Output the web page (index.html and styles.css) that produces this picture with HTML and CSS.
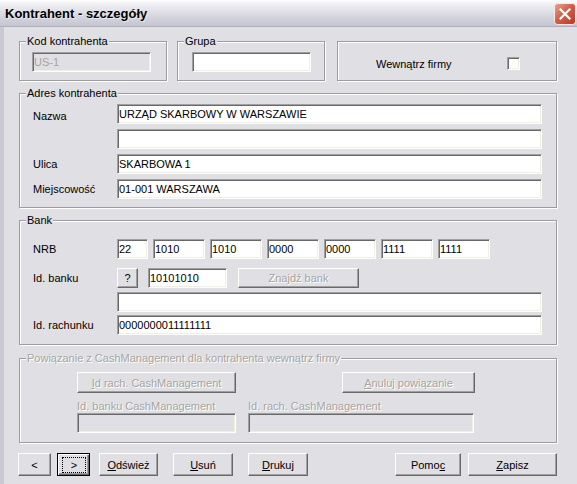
FILE: index.html
```html
<!DOCTYPE html>
<html lang="pl">
<head>
<meta charset="utf-8">
<title>Kontrahent - szczegóły</title>
<link rel="stylesheet" href="styles.css">
</head>
<body>
<div class="window">
  <div class="titlebar">
    <span class="title">Kontrahent - szczegóły</span>
    <span class="close">
      <svg width="22" height="22" viewBox="0 0 22 22">
        <defs>
          <linearGradient id="cg" x1="0" y1="0" x2="1" y2="1">
            <stop offset="0" stop-color="#eba595"/>
            <stop offset="0.45" stop-color="#d3604b"/>
            <stop offset="1" stop-color="#b63927"/>
          </linearGradient>
        </defs>
        <rect x="0.5" y="0.5" width="21" height="21" rx="3" fill="url(#cg)" stroke="#f4ece9"/>
        <path d="M6.5 6.5 L15.5 15.5 M15.5 6.5 L6.5 15.5" stroke="#fff" stroke-width="2.2" stroke-linecap="square"/>
      </svg>
    </span>
  </div>
  <div class="client">
    <div class="content">
      <div class="row-top">
        <div class="group g-kod">
          <span class="legend">Kod kontrahenta</span>
          <div class="field disabled f-kod">US-1</div>
        </div>
        <div class="group g-grupa">
          <span class="legend">Grupa</span>
          <div class="field f-grupa"></div>
        </div>
        <div class="group g-wew">
          <span>Wewnątrz firmy</span>
          <span class="checkbox"></span>
        </div>
      </div>

      <div class="group g-adres">
        <span class="legend">Adres kontrahenta</span>
        <div class="frow"><span class="lbl lbl-low">Nazwa</span><div class="field">URZĄD SKARBOWY W WARSZAWIE</div></div>
        <div class="frow"><span class="lbl"></span><div class="field"></div></div>
        <div class="frow"><span class="lbl">Ulica</span><div class="field">SKARBOWA 1</div></div>
        <div class="frow"><span class="lbl">Miejscowość</span><div class="field">01-001 WARSZAWA</div></div>
      </div>

      <div class="group g-bank">
        <span class="legend">Bank</span>
        <div class="frow">
          <span class="lbl">NRB</span>
          <div class="nrb">
            <div class="field f-nrb1">22</div>
            <div class="field">1010</div>
            <div class="field">1010</div>
            <div class="field">0000</div>
            <div class="field">0000</div>
            <div class="field">1111</div>
            <div class="field">1111</div>
          </div>
        </div>
        <div class="frow r2">
          <span class="lbl">Id. banku</span>
          <div class="bank-id">
            <span class="btn b-q">?</span>
            <div class="field f-bankid">10101010</div>
            <span class="btn disabled b-find">Znajdź bank</span>
          </div>
        </div>
        <div class="frow r3"><span class="lbl"></span><div class="field"></div></div>
        <div class="frow r4"><span class="lbl">Id. rachunku</span><div class="field">0000000011111111</div></div>
      </div>

      <div class="group g-pow">
        <span class="legend dis-text">Powiązanie z CashManagement dla kontrahenta wewnątrz firmy</span>
        <div class="pow-btns">
          <span class="btn disabled b-idrach"><u>I</u>d rach. CashManagement</span>
          <span class="btn disabled b-anuluj"><u>A</u>nuluj powiązanie</span>
        </div>
        <div class="pow-labels">
          <span class="dis-text pl1">Id. banku CashManagement</span>
          <span class="dis-text">Id. rach. CashManagement</span>
        </div>
        <div class="pow-fields">
          <div class="field disabled pf1"></div>
          <div class="field disabled pf2"></div>
        </div>
      </div>

      <div class="actions">
        <span class="btn a-prev">&lt;</span>
        <span class="btn default a-next"><span class="focus">&gt;</span></span>
        <span class="btn a-odswiez"><u>O</u>dśwież</span>
        <span class="btn a-usun"><u>U</u>suń</span>
        <span class="btn a-drukuj"><u>D</u>rukuj</span>
        <span class="btn a-pomoc">Pomo<u>c</u></span>
        <span class="btn a-zapisz"><u>Z</u>apisz</span>
      </div>
    </div>
  </div>
</div>
</body>
</html>
```

FILE: styles.css
```css
* {
  box-sizing: border-box;
}

html,
body {
  margin: 0;
  padding: 0;
}

body {
  width: 577px;
  height: 484px;
  overflow: hidden;
  background: #e0dfe3;
  font-family: "Liberation Sans", Arial, sans-serif;
  font-size: 11px;
  color: #000;
}

.window {
  width: 577px;
  height: 484px;
  overflow: hidden;
  display: flex;
  flex-direction: column;
}

/* title bar */
.titlebar {
  flex: none;
  height: 27px;
  display: flex;
  align-items: center;
  justify-content: space-between;
  padding: 0 1px 0 5px;
  background: linear-gradient(#fdfdfe 0%, #ececf1 22%, #d7d7e0 60%, #c5c5d1 100%);
  border-bottom: 1px solid #aeaebb;
}

.title {
  font-size: 13px;
  font-weight: bold;
  color: #000;
  text-shadow: 1px 1px 0 rgba(255, 255, 255, 0.55);
}

.close {
  display: block;
  width: 22px;
  height: 22px;
  margin-top: 1px;
}

.close svg {
  display: block;
}

/* client area */
.client {
  flex: 1;
  border-left: 4px solid #9a9aa6;
  border-image: linear-gradient(to right, #c9c9d3 0 25%, #8d8d99 25% 50%, #b9b9c5 50% 75%, #d6d6de 75%) 1;
  padding: 14px 0 0 15px;
}

.content {
  width: 538px;
  display: flex;
  flex-direction: column;
}

/* group boxes */
.group {
  position: relative;
  border: 1px solid #9d9da1;
  box-shadow: inset 1px 1px 0 #fff, 1px 1px 0 #fff;
}

.legend {
  position: absolute;
  top: -7px;
  left: 6px;
  padding: 0 1px;
  line-height: 13px;
  background: #e0dfe3;
  white-space: nowrap;
}

.dis-text {
  color: #a6a5a1;
  text-shadow: 1px 1px 0 #fff;
}

/* top row */
.row-top {
  display: flex;
  height: 40px;
}

.g-kod {
  width: 148px;
  padding: 10px 0 0 12px;
}

.g-grupa {
  width: 148px;
  margin-left: 10px;
  padding: 10px 0 0 14px;
}

.g-wew {
  width: 220px;
  margin-left: 12px;
  display: flex;
  align-items: center;
  justify-content: space-between;
  padding: 5px 36px 0 38px;
}

.f-kod {
  width: 119px;
  height: 15px;
}

.f-grupa {
  width: 119px;
}

.checkbox {
  width: 13px;
  height: 13px;
  background: #fff;
  border: 1px solid;
  border-color: #a0a0a0 #fff #fff #a0a0a0;
  box-shadow: inset 1px 1px 0 #696969, inset -1px -1px 0 #f1efe2;
}

/* fields */
.field {
  height: 20px;
  display: flex;
  align-items: center;
  padding: 0 2px 0 1px;
  background: #fff;
  border: 1px solid;
  border-color: #a0a0a0 #fff #fff #a0a0a0;
  box-shadow: inset 1px 1px 0 #696969, inset -1px -1px 0 #f1efe2;
  white-space: nowrap;
  overflow: hidden;
}

.field.disabled {
  background: #e0dfe3;
  color: #a6a5a1;
}

/* buttons */
.btn {
  display: flex;
  align-items: center;
  justify-content: center;
  background: #e0dfe3;
  border: 1px solid;
  border-color: #fff #696969 #696969 #fff;
  box-shadow: inset -1px -1px 0 #a0a0a0;
  white-space: nowrap;
}

.btn.disabled {
  color: #a6a5a1;
  text-shadow: 1px 1px 0 #fff;
}

.btn.default {
  border: 1px solid #000;
  box-shadow: inset 1px 1px 0 #fff, inset -1px -1px 0 #696969, inset -2px -2px 0 #a0a0a0;
  padding: 3px 3px 2px 4px;
  align-items: stretch;
}

.focus {
  flex: 1;
  display: flex;
  align-items: center;
  justify-content: center;
  border: 1px dotted #000;
}

/* address */
.g-adres {
  margin-top: 12px;
  padding: 10px 14px 8px 13px;
  display: flex;
  flex-direction: column;
  gap: 5px;
}

.frow {
  display: flex;
  align-items: center;
}

.lbl {
  flex: none;
  width: 84px;
}

.lbl-low {
  padding-top: 4px;
}

.frow > .field {
  flex: 1;
}

/* bank */
.g-bank {
  margin-top: 12px;
  padding: 18px 14px 9px 13px;
}

.nrb {
  display: flex;
  gap: 5px;
}

.nrb .field {
  width: 52px;
}

.nrb .f-nrb1 {
  width: 31px;
}

.r2 {
  margin-top: 9px;
}

.r3 {
  margin-top: 4px;
}

.r4 {
  margin-top: 3px;
}

.bank-id {
  display: flex;
}

.b-q {
  width: 21px;
  height: 20px;
}

.f-bankid {
  width: 79px;
  margin-left: 10px;
}

.b-find {
  width: 121px;
  height: 20px;
  margin-left: 11px;
}

/* cash management */
.g-pow {
  margin-top: 13px;
  padding: 13px 14px 9px 13px;
}

.pow-btns {
  display: flex;
  height: 21px;
}

.b-idrach {
  width: 159px;
  margin-left: 44px;
}

.b-anuluj {
  width: 133px;
  margin-left: 106px;
}

.pow-labels {
  display: flex;
  margin-top: 7px;
  line-height: 13px;
}

.pl1 {
  width: 171px;
  margin-left: 44px;
}

.pow-fields {
  display: flex;
}

.pf1 {
  width: 159px;
  margin-left: 44px;
}

.pf2 {
  width: 226px;
  margin-left: 12px;
}

/* bottom buttons */
.actions {
  display: flex;
  height: 23px;
  margin-top: 10px;
  margin-left: -1px;
}

.a-prev {
  width: 33px;
}

.a-next {
  width: 33px;
  margin-left: 6px;
}

.a-odswiez {
  width: 59px;
  margin-left: 9px;
}

.a-usun {
  width: 60px;
  margin-left: 15px;
}

.a-drukuj {
  width: 60px;
  margin-left: 15px;
}

.a-pomoc {
  width: 66px;
  margin-left: auto;
}

.a-zapisz {
  width: 89px;
  margin-left: 7px;
}
```
